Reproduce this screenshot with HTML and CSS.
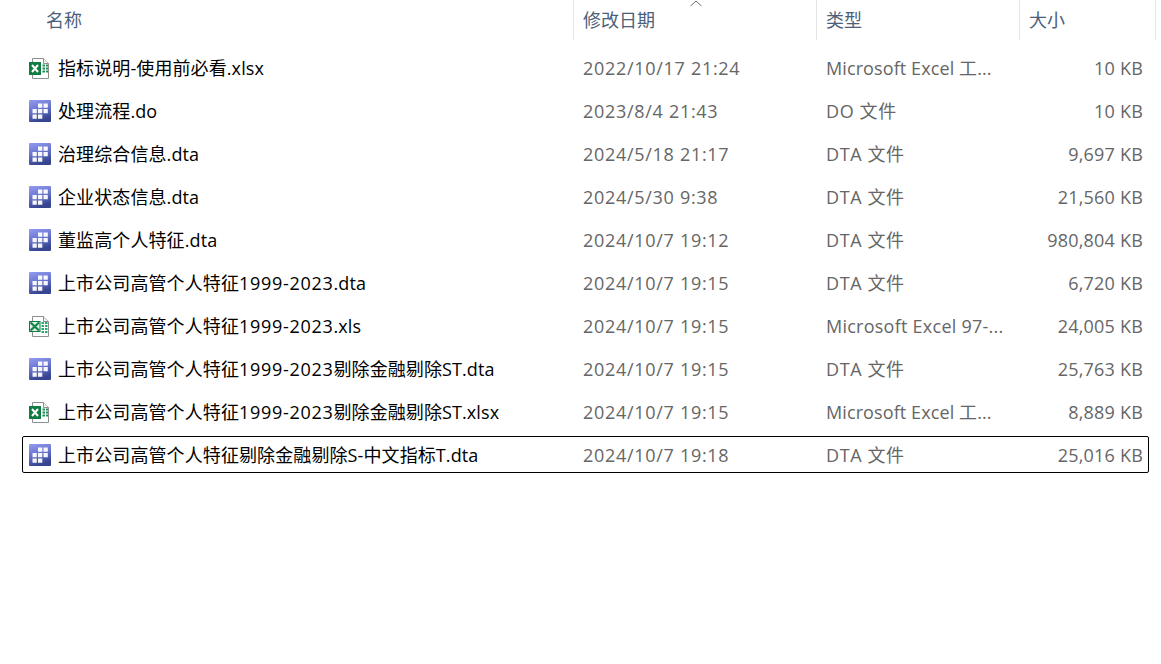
FILE: index.html
```html
<!DOCTYPE html>
<html lang="zh-CN">
<head>
<meta charset="utf-8">
<title>文件列表</title>
<link rel="stylesheet" href="styles.css">
</head>
<body>
<svg class="defs" width="0" height="0">
  <defs>
    <linearGradient id="dtaBg" x1="0" y1="0" x2="0.3" y2="1">
      <stop offset="0" stop-color="#939cf0"/>
      <stop offset="0.5" stop-color="#6b76cf"/>
      <stop offset="1" stop-color="#37448f"/>
    </linearGradient>
    <symbol id="dta" viewBox="0 0 22 22">
      <rect x="0" y="0" width="22" height="22" rx="1" fill="url(#dtaBg)"/>
      <path fill="#fff" fill-opacity=".95" d="M9 3.500h4.300v4.300H9zM14.500 3.500h4.300v4.300h-4.300zM3.500 9h4.300v4.300H3.500zM9 9h4.300v4.300H9zM14.500 9h4.300v4.300h-4.300zM3.500 14.500h4.300v4.300H3.500zM9 14.500h4.300v4.300H9z"/>
    </symbol>
    <symbol id="xlsx" viewBox="0 0 22 22">
      <path d="M3.500 1.500H14.500L19.500 6.500V21.500H3.500Z" fill="#fff" stroke="#8f8f8f"/>
      <path d="M14.500 1.500V6.500H19.500" fill="#f0f0f0" stroke="#8f8f8f"/>
      <path fill="#1e8a55" d="M13.500 7.500h2.500v2h-2.500zM17 7.500h2v2h-2zM13.500 10.500h2.500v2h-2.500zM17 10.500h2v2h-2zM13.500 13.500h2.500v2h-2.500zM17 13.500h2v2h-2z"/>
      <rect x="0" y="5" width="12" height="13" fill="#107c41"/>
      <path d="M3 8l6 7M9 8l-6 7" stroke="#fff" stroke-width="2" fill="none"/>
    </symbol>
    <symbol id="xls" viewBox="0 0 22 22">
      <path d="M3.500 1.500H14.500L19.500 6.500V21.500H3.500Z" fill="#fff" stroke="#8f8f8f"/>
      <path d="M14.500 1.500V6.500H19.500" fill="#f0f0f0" stroke="#8f8f8f"/>
      <path fill="#25a871" d="M12.500 7h2.500v2h-2.500zM16 7h2.500v2H16zM12.500 10h2.500v2h-2.500zM16 10h2.500v2H16zM12.500 13h2.500v2h-2.500zM16 13h2.500v2H16zM12.500 16h2.500v2h-2.500zM16 16h2.500v2H16z"/>
      <rect x="0.500" y="6.500" width="10.500" height="10" fill="#e4f5ec" stroke="#107c41"/>
      <path d="M1.500 7.500l8.500 8M10 7.500l-8.500 8" stroke="#17874e" stroke-width="2.400" fill="none"/>
    </symbol>
  </defs>
</svg>
<main class="list">
  <header class="head">
    <div class="hcell hname">名称</div>
    <div class="hcell hdate">修改日期
      <svg class="sort" width="14" height="7" viewBox="0 0 14 7"><path d="M1.500 6L7 1l5.500 5" fill="none" stroke="#6b6b6b"/></svg>
    </div>
    <div class="hcell">类型</div>
    <div class="hcell">大小</div>
  </header>
  <div class="rows">
    <div class="row"><span class="name"><svg class="ico"><use href="#xlsx"/></svg><span>指标说明-使用前必看.xlsx</span></span><span class="date">2022/10/17 21:24</span><span class="type">Microsoft Excel 工...</span><span class="size">10 KB</span></div>
    <div class="row"><span class="name"><svg class="ico"><use href="#dta"/></svg><span>处理流程.do</span></span><span class="date">2023/8/4 21:43</span><span class="type type-file">DO 文件</span><span class="size">10 KB</span></div>
    <div class="row"><span class="name"><svg class="ico"><use href="#dta"/></svg><span>治理综合信息.dta</span></span><span class="date">2024/5/18 21:17</span><span class="type type-file">DTA 文件</span><span class="size">9,697 KB</span></div>
    <div class="row"><span class="name"><svg class="ico"><use href="#dta"/></svg><span>企业状态信息.dta</span></span><span class="date">2024/5/30 9:38</span><span class="type type-file">DTA 文件</span><span class="size">21,560 KB</span></div>
    <div class="row"><span class="name"><svg class="ico"><use href="#dta"/></svg><span>董监高个人特征.dta</span></span><span class="date">2024/10/7 19:12</span><span class="type type-file">DTA 文件</span><span class="size">980,804 KB</span></div>
    <div class="row"><span class="name"><svg class="ico"><use href="#dta"/></svg><span>上市公司高管个人特征<span class="num">1999-2023</span>.dta</span></span><span class="date">2024/10/7 19:15</span><span class="type type-file">DTA 文件</span><span class="size">6,720 KB</span></div>
    <div class="row"><span class="name"><svg class="ico"><use href="#xls"/></svg><span>上市公司高管个人特征<span class="num">1999-2023</span>.xls</span></span><span class="date">2024/10/7 19:15</span><span class="type type-97">Microsoft Excel 97-...</span><span class="size">24,005 KB</span></div>
    <div class="row"><span class="name"><svg class="ico"><use href="#dta"/></svg><span>上市公司高管个人特征<span class="num">1999-2023</span>剔除金融剔除ST.dta</span></span><span class="date">2024/10/7 19:15</span><span class="type type-file">DTA 文件</span><span class="size">25,763 KB</span></div>
    <div class="row"><span class="name"><svg class="ico"><use href="#xlsx"/></svg><span>上市公司高管个人特征<span class="num">1999-2023</span>剔除金融剔除ST.xlsx</span></span><span class="date">2024/10/7 19:15</span><span class="type">Microsoft Excel 工...</span><span class="size">8,889 KB</span></div>
    <div class="row selected"><span class="name"><svg class="ico"><use href="#dta"/></svg><span>上市公司高管个人特征剔除金融剔除S-中文指标T.dta</span></span><span class="date">2024/10/7 19:18</span><span class="type type-file">DTA 文件</span><span class="size">25,016 KB</span></div>
  </div>
</main>
</body>
</html>
```
FILE: styles.css
```css
* { box-sizing: border-box; }
html, body { margin: 0; height: 100%; background: #fff; overflow: hidden; }
body { font-family: "Open Sans", "Noto Sans CJK SC", sans-serif; font-size: 18px; }
.defs { position: absolute; }
.list { width: 1161px; }
.head {
  display: grid;
  grid-template-columns: 574px 243px 203px 136px;
  height: 40px;
  color: #4c607a;
}
.hcell {
  position: relative;
  padding: 0 0 0 9px;
  line-height: 40px;
  border-right: 1px solid #e5e5e5;
  white-space: nowrap;
}
.hname { padding-left: 46px; }
.sort { position: absolute; top: 0; left: 115px; }
.rows {
  display: flex;
  flex-direction: column;
  gap: 6px;
  padding: 9px 12px 0 22px;
}
.row {
  display: grid;
  grid-template-columns: 551px 243px 203px 130px;
  align-items: center;
  height: 37px;
  line-height: 24px;
  border: 1px solid transparent;
  border-radius: 2px;
  color: #666;
  white-space: nowrap;
}
.row.selected { border-color: #000; }
.name { display: flex; align-items: center; gap: 7px; padding-left: 6px; color: #000; letter-spacing: .1px; }
.num { letter-spacing: .7px; }
.ico { width: 22px; height: 22px; flex: none; }
.date { padding-left: 9px; letter-spacing: .7px; }
.type { padding-left: 9px; letter-spacing: .1px; }
.type-file { letter-spacing: .6px; }
.type-97 { letter-spacing: .25px; }
.size { text-align: right; padding-right: 7px; letter-spacing: .2px; }
```
